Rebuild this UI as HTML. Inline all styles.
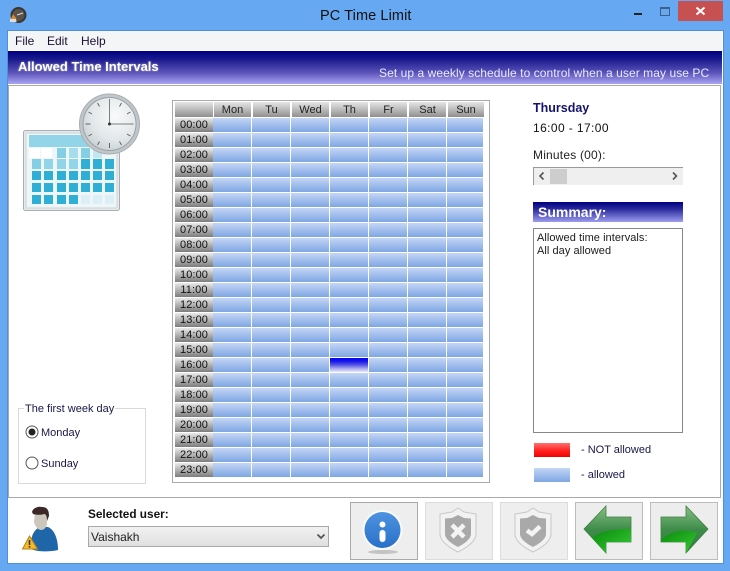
<!DOCTYPE html>
<html>
<head>
<meta charset="utf-8">
<style>
html,body{margin:0;padding:0}
body{width:730px;height:571px;position:relative;overflow:hidden;background:#66a9f2;font-family:"Liberation Sans",sans-serif;font-size:12px;color:#1c1c1c}
div,span.a,svg{position:absolute}
.t{white-space:nowrap;line-height:14px}
.h{background:linear-gradient(#e4e4e4,#c8c8c8 35%,#8f8f8f);height:15px;top:102px;text-align:center;line-height:16px;color:#222;font-size:11px}
.l{left:175px;width:38px;height:14px;background:linear-gradient(#eaeaea,#bdbdbd 40%,#7c7c7c);text-align:center;line-height:14px;color:#111;font-size:11px;letter-spacing:.1px}
.btn{top:502px;width:66px;height:56px;background:#eeeeee;border:1px solid #dcdcdc}
.s{font-size:11px}
</style>
</head>
<body>
<!-- title bar -->
<svg style="left:9px;top:6px" width="18" height="18" viewBox="0 0 18 18"><circle cx="9.500" cy="9" r="8" fill="#3a3633"/><circle cx="9.500" cy="9" r="6" fill="#58524c"/><path d="M8 9l6-2" stroke="#ddd" stroke-width="1"/><path d="M1 15l3-7 3 4 1 4H1z" fill="#d98b2b"/><rect x="1" y="13" width="6" height="3" fill="#ddd"/></svg>
<div class="t" style="left:320px;top:8px;font-size:14.500px;line-height:17px;color:#111;letter-spacing:.1px">PC Time Limit</div>
<div style="left:634px;top:13px;width:8px;height:2px;background:#222"></div>
<div style="left:660px;top:7px;width:8px;height:6px;border:1px solid #3f5f85;border-top-width:2px"></div>
<div style="left:678px;top:1px;width:45px;height:20px;background:#c75050"></div>
<svg style="left:695px;top:6px" width="11" height="10"><path d="M1.500 1.500l8 7M9.500 1.500l-8 7" stroke="#fff" stroke-width="2"/></svg>

<!-- client -->
<div style="left:7px;top:30px;width:715px;height:532px;background:#fff;border:1px solid #4f8fd8"></div>
<div style="left:8px;top:31px;width:714px;height:19px;background:#f4f5f7"></div>
<div class="t" style="left:15px;top:34px;color:#1c1030">File</div>
<div class="t" style="left:47px;top:34px;color:#1c1030">Edit</div>
<div class="t" style="left:81px;top:34px;color:#1c1030">Help</div>
<div style="left:8px;top:51px;width:714px;height:33px;background:linear-gradient(#000080,#1a1a8e 25%,#5a52b8 65%,#aaa5f2)"></div>
<div class="t" style="left:18px;top:60px;color:#fff;font-weight:bold;font-size:13px;text-shadow:0 0 2px #aab">Allowed Time Intervals</div>
<div class="t" style="left:379px;top:66px;color:#e6ecff;font-size:12px;letter-spacing:.07px">Set up a weekly schedule to control when a user may use PC</div>

<!-- content panel -->
<div style="left:8px;top:85px;width:711px;height:411px;border:1px solid #aaaaaa;background:#fff"></div>

<!-- calendar/clock -->
<svg style="left:20px;top:90px" width="125" height="125" viewBox="20 90 125 125">
<defs><radialGradient id="cf" cx=".6" cy=".35" r=".75"><stop offset="0" stop-color="#fafbfb"/><stop offset=".6" stop-color="#e2e7e9"/><stop offset="1" stop-color="#c3ccd1"/></radialGradient></defs>
<rect x="23.500" y="130.500" width="96" height="80" rx="2" fill="#e6eaec" stroke="#a8aeb2"/>
<rect x="26" y="133" width="91" height="75" fill="#eef6f8" stroke="#ccd2d6"/>
<rect x="29" y="135" width="84" height="12" fill="#92d4e8"/>
<g fill="#2fafd6">
<rect x="29" y="148" width="11" height="10" fill="#fff"/><rect x="41" y="148" width="11" height="10" fill="#fff"/><rect x="57" y="148" width="9" height="10" fill="#85cfe5"/><rect x="69" y="148" width="9" height="10" fill="#a6dcec"/><rect x="81" y="148" width="9" height="10" fill="#85cfe5"/><rect x="93" y="148" width="9" height="10" fill="#c3e7f1"/>
<rect x="32" y="159" width="9" height="10" fill="#85cfe5"/><rect x="44" y="159" width="9" height="10" fill="#93d5e8"/><rect x="57" y="159" width="9" height="10" fill="#93d5e8"/><rect x="69" y="159" width="9" height="10" fill="#93d5e8"/><rect x="81" y="159" width="9" height="10"/><rect x="93" y="159" width="9" height="10"/><rect x="105" y="159" width="9" height="10"/>
<rect x="32" y="171" width="9" height="9"/><rect x="44" y="171" width="9" height="9"/><rect x="57" y="171" width="9" height="9"/><rect x="69" y="171" width="9" height="9"/><rect x="81" y="171" width="9" height="9"/><rect x="93" y="171" width="9" height="9"/><rect x="105" y="171" width="9" height="9"/>
<rect x="32" y="183" width="9" height="9"/><rect x="44" y="183" width="9" height="9"/><rect x="57" y="183" width="9" height="9"/><rect x="69" y="183" width="9" height="9"/><rect x="81" y="183" width="9" height="9"/><rect x="93" y="183" width="9" height="9"/><rect x="105" y="183" width="9" height="9"/>
<rect x="32" y="195" width="9" height="9"/><rect x="44" y="195" width="9" height="9"/><rect x="57" y="195" width="9" height="9"/><rect x="69" y="195" width="9" height="9"/><rect x="81" y="195" width="9" height="9" fill="#dceff6"/><rect x="93" y="195" width="9" height="9" fill="#dceff6"/><rect x="105" y="195" width="9" height="9" fill="#dceff6"/>
</g>
<circle cx="109.500" cy="124" r="30" fill="#c0c6c9" stroke="#a8aeb2"/>
<circle cx="109.500" cy="124" r="26.500" fill="url(#cf)" stroke="#9aa2a6"/>
<path d="M109.500 100v5M109.500 143v5M85.500 124h5M128.500 124h5M97.500 103l2 3.500M121.500 145l-2-3.500M121.500 103l-2 3.500M97.500 145l2-3.500M88.500 112l3.500 2M130.500 136l-3.500-2M130.500 112l-3.500 2M88.500 136l3.500-2" stroke="#666" stroke-width="1"/>
<path d="M109.500 124V99M109.500 124h23" stroke="#7a8185" stroke-width="1"/>
<circle cx="109.500" cy="124" r="1.500" fill="#333"/>
</svg>

<!-- group box -->
<div style="left:18px;top:408px;width:126px;height:74px;border:1px solid #d9d9d9"></div>
<div class="t s" style="left:24px;top:402px;background:#fff;padding:0 1px;color:#18184a">The first week day</div>
<svg style="left:25px;top:425px" width="15" height="45"><circle cx="7" cy="7" r="6" fill="#fff" stroke="#555"/><circle cx="7" cy="7" r="3.500" fill="#222"/><circle cx="7" cy="38" r="6" fill="#fff" stroke="#555"/></svg>
<div class="t s" style="left:41px;top:426px;color:#18184a">Monday</div>
<div class="t s" style="left:41px;top:457px;color:#18184a">Sunday</div>

<!-- grid -->
<div style="left:172px;top:100px;width:316px;height:381px;border:1px solid #aaaaaa;background:#fff"></div>
<div class="h" style="left:175px;width:38px"></div>
<div class="h" style="left:214px;width:37px">Mon</div>
<div class="h" style="left:253px;width:37px">Tu</div>
<div class="h" style="left:292px;width:37px">Wed</div>
<div class="h" style="left:331px;width:37px">Th</div>
<div class="h" style="left:370px;width:37px">Fr</div>
<div class="h" style="left:409px;width:37px">Sat</div>
<div class="h" style="left:448px;width:36px">Sun</div>
<div style="left:213px;top:118px;width:270px;height:359px;background:repeating-linear-gradient(90deg,transparent 0,transparent 38px,#fff 38px,#fff 39px),repeating-linear-gradient(180deg,#c4d6f6 0,#7ea7e3 14px,#fff 14px,#fff 15px)"></div>
<div style="left:330px;top:358px;width:38px;height:14px;background:linear-gradient(#0000f0,#1a1ae8 25%,#5858e6 50%,#a8a8ee 75%,#e6e8fa)"></div>
<div class="l" style="top:118px">00:00</div>
<div class="l" style="top:133px">01:00</div>
<div class="l" style="top:148px">02:00</div>
<div class="l" style="top:163px">03:00</div>
<div class="l" style="top:178px">04:00</div>
<div class="l" style="top:193px">05:00</div>
<div class="l" style="top:208px">06:00</div>
<div class="l" style="top:223px">07:00</div>
<div class="l" style="top:238px">08:00</div>
<div class="l" style="top:253px">09:00</div>
<div class="l" style="top:268px">10:00</div>
<div class="l" style="top:283px">11:00</div>
<div class="l" style="top:298px">12:00</div>
<div class="l" style="top:313px">13:00</div>
<div class="l" style="top:328px">14:00</div>
<div class="l" style="top:343px">15:00</div>
<div class="l" style="top:358px">16:00</div>
<div class="l" style="top:373px">17:00</div>
<div class="l" style="top:388px">18:00</div>
<div class="l" style="top:403px">19:00</div>
<div class="l" style="top:418px">20:00</div>
<div class="l" style="top:433px">21:00</div>
<div class="l" style="top:448px">22:00</div>
<div class="l" style="top:463px">23:00</div>

<!-- right column -->
<div class="t" style="left:533px;top:101px;font-weight:bold;font-size:12.500px;color:#14146e">Thursday</div>
<div class="t" style="left:533px;top:121px;color:#111;letter-spacing:.4px">16:00 - 17:00</div>
<div class="t" style="left:533px;top:148px;color:#222;letter-spacing:.2px">Minutes (00):</div>
<div style="left:533px;top:167px;width:149px;height:17px;background:#efefef;border-top:1px solid #999;border-left:1px solid #999"></div>
<div style="left:550px;top:169px;width:17px;height:15px;background:#cdcdcd"></div>
<svg style="left:538px;top:171px" width="8" height="10"><path d="M5.500 1.500L2 5l3.500 3.500" fill="none" stroke="#555" stroke-width="1.600"/></svg>
<svg style="left:671px;top:171px" width="8" height="10"><path d="M2 1.500L5.500 5 2 8.500" fill="none" stroke="#555" stroke-width="1.600"/></svg>
<div style="left:533px;top:202px;width:150px;height:20px;background:linear-gradient(#000080,#2a2a9c 35%,#9c9cf0)"></div>
<div class="t" style="left:538px;top:205px;color:#fff;font-weight:bold;font-size:14px">Summary:</div>
<div style="left:533px;top:228px;width:148px;height:203px;border:1px solid #888;background:#fff"></div>
<div class="t s" style="left:537px;top:231px;letter-spacing:.05px">Allowed time intervals:</div>
<div class="t s" style="left:537px;top:244px;letter-spacing:.05px">All day allowed</div>
<div style="left:534px;top:443px;width:36px;height:14px;background:linear-gradient(#ff7070,#ff2020 55%,#f00000)"></div>
<div class="t s" style="left:581px;top:443px;color:#18184a">- NOT allowed</div>
<div style="left:534px;top:468px;width:36px;height:14px;background:linear-gradient(#c4d6f6,#7ea7e3)"></div>
<div class="t s" style="left:581px;top:468px;color:#18184a">- allowed</div>

<!-- footer -->
<svg style="left:20px;top:505px" width="42" height="48" viewBox="20 505 42 48">
<path d="M31 549C30 538 33 530 40 527H48C55 530 58 540 58 550 50 552 38 552 31 549z" fill="#1f66a8"/>
<path d="M35 513H47V524C46 528 44 530 41 530 38 530 35 526 34 522z" fill="#cdc6bc"/>
<path d="M32 512C33 508 38 506 42 507 47 507 49 510 49 516L47 521C47 516 46 514 44 514 41 515 37 515 33 514z" fill="#3c2826"/>
<path d="M29.500 536l-7 13h15z" fill="#f2bb26" stroke="#b8801a"/>
<path d="M29.500 540v5M29.500 546v1.500" stroke="#333" stroke-width="1.600"/>
</svg>
<div class="t" style="left:88px;top:507px;font-weight:bold;color:#111;font-size:11.800px">Selected user:</div>
<div style="left:88px;top:526px;width:239px;height:19px;background:linear-gradient(#f1f1f1,#e0e0e0);border:1px solid #aaa"></div>
<div class="t" style="left:91px;top:530px;color:#222">Vaishakh</div>
<svg style="left:316px;top:533px" width="10" height="8"><path d="M1.500 1.500L5 5l3.500-3.500" fill="none" stroke="#555" stroke-width="1.800"/></svg>

<!-- buttons -->
<div class="btn" style="left:350px;border-color:#aaaaaa"></div>
<svg style="left:357px;top:508px" width="52" height="48" viewBox="0 0 52 48">
<defs><linearGradient id="ib" x1="0" y1="0" x2="0" y2="1"><stop offset="0" stop-color="#4d94e0"/><stop offset="1" stop-color="#2a70c8"/></linearGradient></defs>
<ellipse cx="26" cy="44" rx="15" ry="2" fill="#c4c4c4"/>
<circle cx="25.500" cy="22" r="20" fill="#fafafa"/>
<circle cx="25.500" cy="22" r="18" fill="url(#ib)"/>
<circle cx="25.500" cy="16.500" r="3" fill="#fff"/>
<rect x="22.500" y="22" width="6" height="12" rx="3" fill="#fff"/>
</svg>
<div class="btn" style="left:425px"></div>
<svg style="left:438px;top:506px" width="42" height="50" viewBox="0 0 42 50">
<path d="M20 2L26 6 38 8V28C38 36 28 42 20 46 12 42 2 36 2 28V8L14 6z" fill="#f2f2f2" stroke="#c8c8c8"/>
<path d="M20 9L26 12 33 12.500V28C33 33 26 38 20 41 14 38 7 33 7 28V12.500L14 12z" fill="#a9a9a9"/>
<path d="M14 19L26 31M26 19L14 31" stroke="#f4f4f4" stroke-width="4.500"/>
</svg>
<div class="btn" style="left:500px"></div>
<svg style="left:513px;top:506px" width="42" height="50" viewBox="0 0 42 50">
<path d="M20 2L26 6 38 8V28C38 36 28 42 20 46 12 42 2 36 2 28V8L14 6z" fill="#f2f2f2" stroke="#c8c8c8"/>
<path d="M20 9L26 12 33 12.500V28C33 33 26 38 20 41 14 38 7 33 7 28V12.500L14 12z" fill="#a9a9a9"/>
<path d="M14 24.500L19 28 27 20.500" fill="none" stroke="#f4f4f4" stroke-width="4.500"/>
</svg>
<div class="btn" style="left:575px;background:#ededed;border-color:#bcbcbc"></div>
<svg style="left:582px;top:504px" width="52" height="52" viewBox="0 0 52 52">
<defs>
<linearGradient id="ag" x1="0" y1="0" x2="0" y2="1"><stop offset="0" stop-color="#86c086"/><stop offset=".5" stop-color="#3f8c4a"/><stop offset="1" stop-color="#2f7f3f"/></linearGradient>
<linearGradient id="al" x1="0" y1="0" x2="1" y2="1"><stop offset="0" stop-color="#0a8a0a"/><stop offset="1" stop-color="#38cc38"/></linearGradient>
</defs>
<path d="M2 25L24 2V13H49V38H24V49z" fill="url(#ag)" stroke="#3f7f3f" stroke-width=".8"/>
<path d="M10 34C20 26 34 25 49 25V38H24V49z" fill="url(#al)"/>
</svg>
<div class="btn" style="left:650px;background:#ededed;border-color:#bcbcbc"></div>
<svg style="left:659px;top:504px" width="52" height="52" viewBox="0 0 52 52">
<path d="M49 25L27 2V13H2V38H27V49z" fill="url(#ag)" stroke="#3f7f3f" stroke-width=".8"/>
<path d="M2 38V36C10 28 24 24 38 29L27 49V38z" fill="url(#al)"/>
</svg>
</body>
</html>
